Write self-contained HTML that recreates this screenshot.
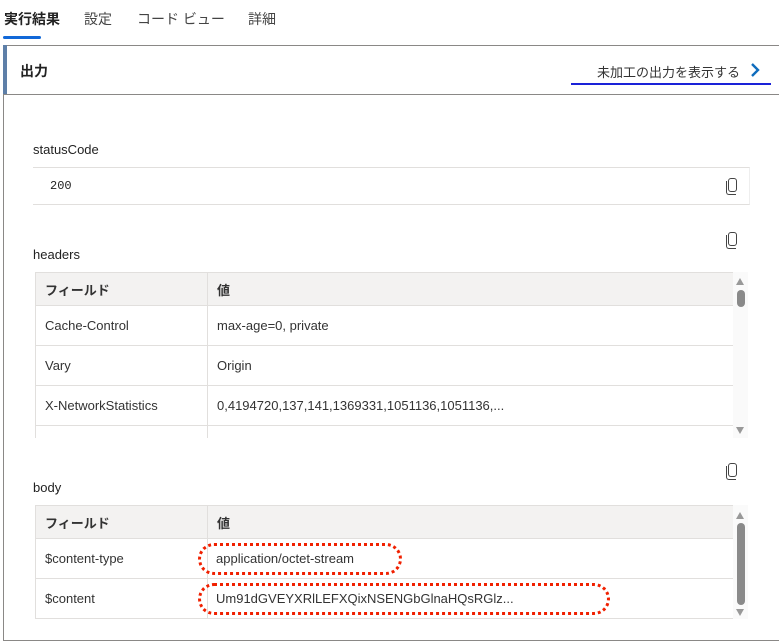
<!DOCTYPE html>
<html><head><meta charset="utf-8"><style>
*{box-sizing:border-box;margin:0;padding:0}
body{width:779px;height:644px;background:#fff;font-family:"Liberation Sans","Noto Sans CJK JP",sans-serif;color:#323130;position:relative;overflow:hidden;font-size:13px}
.a{position:absolute}
.tab{top:9px;font-size:14px;color:#444}
.lbl{font-size:13px;color:#222}
.copy{width:9px;height:14px;border:1.3px solid #444;border-radius:3px}
.copy:before{content:"";position:absolute;left:-3px;top:2px;width:9px;height:13px;border-left:1.3px solid #444;border-bottom:1.3px solid #444;border-radius:0 0 0 3px}
table{border-collapse:collapse;font-size:13px}
td{border:1px solid #e1dfdd;padding:0 9px;color:#333;white-space:nowrap}
tr.h td{background:#f3f2f1;font-weight:bold;height:33px}
tr.r td{height:40px}
.sb{width:15px;background:#fafafa}
.th{background:#8a8a8a;border-radius:4px;width:8px;left:3.5px}
.up,.dn{left:3px;width:0;height:0;border-left:4.5px solid transparent;border-right:4.5px solid transparent}
.up{border-bottom:7px solid #999}.dn{border-top:7px solid #999}
.oval{border:3px dotted #f02000;border-radius:16px}
</style></head><body>
<div class="a tab" style="left:4px;font-weight:bold;color:#222">実行結果</div>
<div class="a tab" style="left:84px">設定</div>
<div class="a tab" style="left:137px">コード ビュー</div>
<div class="a tab" style="left:248px">詳細</div>
<div class="a" style="left:3px;top:36px;width:38px;height:3px;background:#1168d8;border-radius:2px"></div>

<div class="a" style="left:3px;top:45px;width:780px;height:596px;border:1px solid #8a8886;border-right:none"></div>
<div class="a" style="left:3px;top:45px;width:4px;height:50px;background:#5e7fa8"></div>
<div class="a" style="left:3px;top:94px;width:776px;height:1px;background:#8a8886"></div>
<div class="a" style="left:20px;top:61px;font-size:14px;font-weight:bold;color:#222">出力</div>
<div class="a" style="left:597px;top:62px;font-size:13px;color:#333">未加工の出力を表示する</div>
<div class="a" style="left:571px;top:83px;width:200px;height:2px;background:#1a22d8"></div>
<svg class="a" style="left:748px;top:62px" width="14" height="16"><path d="M4 2 L10 8 L4 14" stroke="#0f6cbd" stroke-width="2.4" fill="none"/></svg>

<div class="a lbl" style="left:33px;top:142px">statusCode</div>
<div class="a" style="left:33px;top:167px;width:717px;height:38px;border-top:1px solid #e1dfdd;border-bottom:1px solid #e1dfdd;border-right:1px solid #eee"></div>
<div class="a" style="left:50px;top:179px;font-family:'Liberation Mono',monospace;font-size:12px;color:#222">200</div>
<div class="a copy" style="left:728px;top:178px"></div>

<div class="a copy" style="left:728px;top:232px"></div>
<div class="a lbl" style="left:33px;top:247px">headers</div>
<div class="a" style="left:35px;top:272px;width:699px;height:166px;overflow:hidden">
<table style="width:699px"><tr class="h"><td style="width:172px">フィールド</td><td>値</td></tr>
<tr class="r"><td>Cache-Control</td><td>max-age=0, private</td></tr>
<tr class="r"><td>Vary</td><td>Origin</td></tr>
<tr class="r"><td>X-NetworkStatistics</td><td>0,4194720,137,141,1369331,1051136,1051136,...</td></tr>
<tr class="r"><td></td><td></td></tr></table></div>
<div class="a sb" style="left:733px;top:272px;height:166px">
<div class="a up" style="top:6px"></div><div class="a th" style="top:18px;height:17px"></div><div class="a dn" style="top:155px"></div></div>

<div class="a copy" style="left:728px;top:463px"></div>
<div class="a lbl" style="left:33px;top:480px">body</div>
<div class="a" style="left:35px;top:505px;width:699px;height:114px;overflow:hidden">
<table style="width:699px"><tr class="h"><td style="width:172px">フィールド</td><td>値</td></tr>
<tr class="r"><td>$content-type</td><td style="padding-left:8px">application/octet-stream</td></tr>
<tr class="r"><td>$content</td><td style="padding-left:8px">Um91dGVEYXRlLEFXQixNSENGbGlnaHQsRGlz...</td></tr></table></div>
<div class="a sb" style="left:733px;top:505px;height:114px">
<div class="a up" style="top:7px"></div><div class="a th" style="top:18px;height:82px"></div><div class="a dn" style="top:104px"></div></div>
<div class="a oval" style="left:198px;top:543px;width:204px;height:32px"></div>
<div class="a oval" style="left:198px;top:583px;width:412px;height:32px"></div>
</body></html>
